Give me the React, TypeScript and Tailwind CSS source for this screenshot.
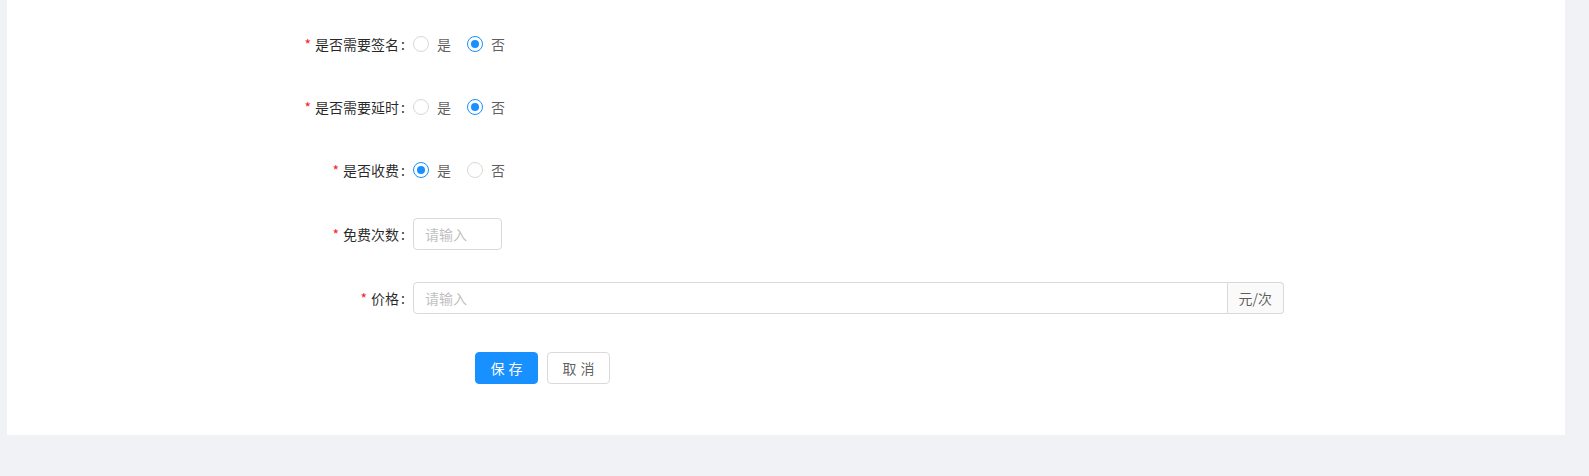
import { ReactNode } from 'react';

const FONT = '"Noto Sans CJK SC", "Noto Sans", sans-serif';

function Label({ text }: { text: string }) {
  return (
    <div className="w-[406px] shrink-0 flex items-center justify-end text-[14px] text-[rgba(0,0,0,0.85)]">
      <span className="mr-[4px] text-[14px] text-[#f5222d]">*</span>
      <span>{text}</span>
      <span className="ml-[2px] mr-[8px]">:</span>
    </div>
  );
}

function Radio({ label, checked }: { label: string; checked?: boolean }) {
  return (
    <label className="mr-[8px] inline-flex items-center text-[14px] text-[rgba(0,0,0,0.65)] cursor-pointer">
      <span
        className={`relative box-border h-[16px] w-[16px] rounded-full border bg-white ${
          checked ? 'border-[#1890ff]' : 'border-[#d9d9d9]'
        }`}
      >
        {checked && (
          <span className="absolute left-[3px] top-[3px] h-[8px] w-[8px] rounded-full bg-[#1890ff]" />
        )}
      </span>
      <span className="px-[8px]">{label}</span>
    </label>
  );
}

function Row({ label, gap = 'mb-[24px]', children }: { label: string; gap?: string; children: ReactNode }) {
  return (
    <div className={`${gap} flex h-[40px] items-center`}>
      <Label text={label} />
      <div className="flex items-center">{children}</div>
    </div>
  );
}

export default function App() {
  return (
    <div className="min-h-screen bg-[#f0f2f5] pl-[7px] pr-[24px]" style={{ fontFamily: FONT }}>
      <div className="h-[435px] bg-white pt-[24px]">
        <Row label="是否需要签名" gap="mb-[23px]">
          <Radio label="是" />
          <Radio label="否" checked />
        </Row>
        <Row label="是否需要延时" gap="mb-[23px]">
          <Radio label="是" />
          <Radio label="否" checked />
        </Row>
        <Row label="是否收费">
          <Radio label="是" checked />
          <Radio label="否" />
        </Row>
        <Row label="免费次数">
          <input
            placeholder="请输入"
            className="box-border h-[32px] w-[89px] rounded-[4px] border border-[#d9d9d9] px-[11px] text-[14px] text-[rgba(0,0,0,0.65)] outline-none placeholder:text-[#bfbfbf]"
          />
        </Row>
        <Row label="价格">
          <div className="flex h-[32px] w-[871px]">
            <input
              placeholder="请输入"
              className="box-border h-[32px] flex-1 rounded-l-[4px] border border-[#d9d9d9] px-[11px] text-[14px] text-[rgba(0,0,0,0.65)] outline-none placeholder:text-[#bfbfbf]"
            />
            <span className="box-border flex h-[32px] items-center rounded-r-[4px] border border-l-0 border-[#d9d9d9] bg-[#fafafa] px-[11px] text-[14px] text-[rgba(0,0,0,0.65)]">
              元/次
            </span>
          </div>
        </Row>
        <div className="flex pt-[10px] pl-[468px]">
          <button className="box-border h-[32px] w-[63px] rounded-[4px] border border-[#1890ff] bg-[#1890ff] text-[14px] tracking-[4px] pl-[4px] text-white">
            保存
          </button>
          <button className="ml-[9px] box-border h-[32px] w-[63px] rounded-[4px] border border-[#d9d9d9] bg-white text-[14px] tracking-[4px] pl-[4px] text-[rgba(0,0,0,0.65)]">
            取消
          </button>
        </div>
      </div>
    </div>
  );
}
